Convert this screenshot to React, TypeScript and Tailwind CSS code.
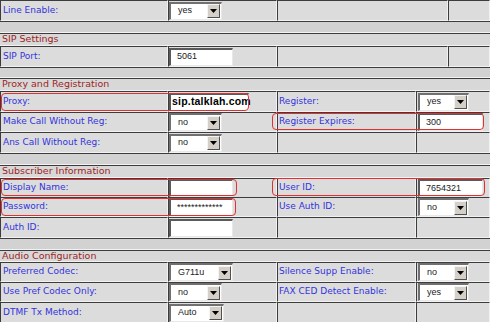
import React from "react";

const labelFont = "font-['DejaVu_Sans',Verdana,sans-serif]";
const ctrlFont = "font-['Liberation_Sans',Arial,sans-serif]";
const cellBorder =
  "border-t border-l border-t-[#3c3c3c] border-l-[#3c3c3c] border-r border-b border-r-[#f2f2f2] border-b-[#f2f2f2] bg-[#dcdcdc]";

function Select({ value, w }: { value: string; w: string }) {
  return (
    <div
      className={`flex h-[18px] items-center bg-white border-t-2 border-l-2 border-t-[#707070] border-l-[#707070] border-r border-b border-r-[#e8e8e8] border-b-[#e8e8e8] ${w}`}
    >
      <span className={`flex-1 pl-[7px] text-[9px] text-[#222] ${ctrlFont}`}>{value}</span>
      <span className="mr-[1px] flex h-[14px] w-[13px] items-center justify-center border border-t-[#f4f4f4] border-l-[#f4f4f4] border-r-[#505050] border-b-[#505050] bg-[#d4d0c8]">
        <svg width="7" height="4" viewBox="0 0 7 4">
          <path d="M0 0h7L3.5 4z" fill="#000" />
        </svg>
      </span>
    </div>
  );
}

function Field({ value = "", w = "w-[64px]", bold = false }: { value?: string; w?: string; bold?: boolean }) {
  return (
    <div
      className={`flex h-[18px] items-center bg-white border-t-2 border-l-2 border-t-[#5a5a5a] border-l-[#5a5a5a] border-r border-b border-r-[#e8e8e8] border-b-[#e8e8e8] ${w}`}
    >
      {bold ? (
        <span className="pl-[1px] text-[10.5px] font-bold tracking-[0.2px] text-black font-['Liberation_Sans',Arial,sans-serif] whitespace-nowrap">
          {value}
        </span>
      ) : (
        <span className={`pl-[6px] text-[9px] text-[#222] ${ctrlFont}`}>{value}</span>
      )}
    </div>
  );
}

function Label({ text, first }: { text?: string; first?: boolean }) {
  return (
    <div className={`flex items-center ${first ? "pl-[2px]" : "pl-[1px]"} ${cellBorder}`}>
      {text && <span className={`text-[9px] text-[#3333dd] whitespace-nowrap ${labelFont}`}>{text}</span>}
    </div>
  );
}

function Ctrl({ children }: { children?: React.ReactNode }) {
  return <div className={`flex items-center ${cellBorder}`}>{children}</div>;
}

function Empty({ h }: { h: string }) {
  return <div className={`w-full ${h} bg-[#d2d2d2] border-t border-t-[#3c3c3c] border-b border-b-[#f2f2f2]`} />;
}

function Header({ text, h }: { text: string; h: string }) {
  return (
    <div className={`flex w-full ${h} items-center pl-[2px] bg-[#d8d8d8] border-t border-t-[#3c3c3c] border-b border-b-[#f2f2f2]`}>
      <span className={`text-[9.5px] text-[#9b2525] whitespace-nowrap ${labelFont}`}>{text}</span>
    </div>
  );
}

function Row({
  h,
  wide,
  children,
  marks,
}: {
  h: string;
  wide?: boolean;
  children: React.ReactNode;
  marks?: React.ReactNode;
}) {
  return (
    <div
      className={`relative grid w-full ${h} ${
        wide ? "grid-cols-[168px_109px_171px_1fr]" : "grid-cols-[168px_109px_139px_1fr]"
      }`}
    >
      {children}
      {marks}
    </div>
  );
}

function Mark({ pos }: { pos: string }) {
  return <div className={`pointer-events-none absolute rounded-[4px] border border-[#e23030] ${pos}`} />;
}

export default function App() {
  return (
    <div className="h-[322px] w-[490px] overflow-hidden bg-[#dcdcdc]">
      <Row h="h-[21px]" wide>
        <Label first text="Line Enable:" />
        <Ctrl>
          <Select value="yes" w="w-[53px]" />
        </Ctrl>
        <Label />
        <Ctrl />
      </Row>
      <Empty h="h-[12px]" />
      <Header text="SIP Settings" h="h-[13px]" />
      <Row h="h-[21px]" wide>
        <Label first text="SIP Port:" />
        <Ctrl>
          <Field value="5061" w="w-[64px]" />
        </Ctrl>
        <Label />
        <Ctrl />
      </Row>
      <Empty h="h-[11px]" />
      <Header text="Proxy and Registration" h="h-[13px]" />
      <Row h="h-[21px]" marks={<Mark pos="left-[1px] top-[2px] h-[18px] w-[248px]" />}>
        <Label first text="Proxy:" />
        <Ctrl>
          <Field value="sip.talklah.com" w="w-[80px]" bold />
        </Ctrl>
        <Label text="Register:" />
        <Ctrl>
          <div className="pl-[1px]">
            <Select value="yes" w="w-[51px]" />
          </div>
        </Ctrl>
      </Row>
      <Row h="h-[20px]" marks={<Mark pos="left-[272px] top-[1px] h-[17px] w-[212px]" />}>
        <Label first text="Make Call Without Reg:" />
        <Ctrl>
          <Select value="no" w="w-[53px]" />
        </Ctrl>
        <Label text="Register Expires:" />
        <Ctrl>
          <div className="pl-[1px]">
            <Field value="300" w="w-[65px]" />
          </div>
        </Ctrl>
      </Row>
      <Row h="h-[21px]">
        <Label first text="Ans Call Without Reg:" />
        <Ctrl>
          <Select value="no" w="w-[53px]" />
        </Ctrl>
        <Label />
        <Ctrl />
      </Row>
      <Empty h="h-[12px]" />
      <Header text="Subscriber Information" h="h-[13px]" />
      <Row
        h="h-[19px]"
        marks={
          <>
            <Mark pos="left-[1px] top-[1px] h-[17px] w-[236px]" />
            <Mark pos="left-[272px] top-[0px] h-[18px] w-[213px]" />
          </>
        }
      >
        <Label first text="Display Name:" />
        <Ctrl>
          <Field w="w-[64px]" />
        </Ctrl>
        <Label text="User ID:" />
        <Ctrl>
          <div className="pl-[1px]">
            <Field value="7654321" w="w-[65px]" />
          </div>
        </Ctrl>
      </Row>
      <Row h="h-[20px]" marks={<Mark pos="left-[1px] top-[1px] h-[18px] w-[235px]" />}>
        <Label first text="Password:" />
        <Ctrl>
          <Field value="*************" w="w-[64px]" />
        </Ctrl>
        <Label text="Use Auth ID:" />
        <Ctrl>
          <div className="pl-[1px]">
            <Select value="no" w="w-[51px]" />
          </div>
        </Ctrl>
      </Row>
      <Row h="h-[21px]">
        <Label first text="Auth ID:" />
        <Ctrl>
          <Field w="w-[64px]" />
        </Ctrl>
        <Label />
        <Ctrl />
      </Row>
      <Empty h="h-[12px]" />
      <Header text="Audio Configuration" h="h-[12px]" />
      <Row h="h-[20px]">
        <Label first text="Preferred Codec:" />
        <Ctrl>
          <Select value="G711u" w="w-[64px]" />
        </Ctrl>
        <Label text="Silence Supp Enable:" />
        <Ctrl>
          <div className="pl-[1px]">
            <Select value="no" w="w-[51px]" />
          </div>
        </Ctrl>
      </Row>
      <Row h="h-[20px]">
        <Label first text="Use Pref Codec Only:" />
        <Ctrl>
          <Select value="no" w="w-[53px]" />
        </Ctrl>
        <Label text="FAX CED Detect Enable:" />
        <Ctrl>
          <div className="pl-[1px]">
            <Select value="yes" w="w-[51px]" />
          </div>
        </Ctrl>
      </Row>
      <Row h="h-[21px]">
        <Label first text="DTMF Tx Method:" />
        <Ctrl>
          <Select value="Auto" w="w-[55px]" />
        </Ctrl>
        <Label />
        <Ctrl />
      </Row>
    </div>
  );
}
